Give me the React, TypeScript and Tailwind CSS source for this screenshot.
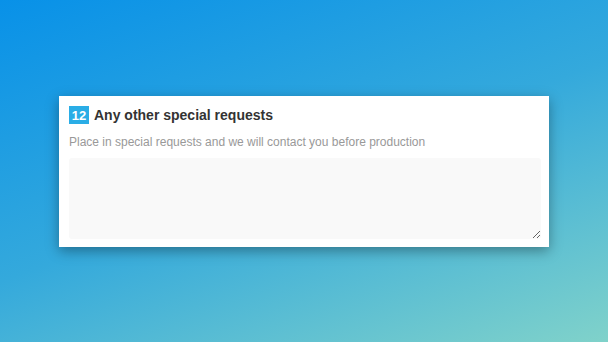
import React from "react";

export default function App() {
  return (
    <div
      className="w-[608px] h-[342px] flex items-start justify-center bg-[linear-gradient(160deg,#0891e8_0%,#34a9dc_50%,#80d2ca_100%)]"
      style={{ fontFamily: '"Liberation Sans", Arial, sans-serif' }}
    >
      <div className="mt-[96px] w-[490px] bg-white px-[10px] pt-[10px] pb-[8px] shadow-[0_4px_12px_rgba(0,0,0,0.35)]">
        <div className="flex items-center h-[18px]">
          <span className="w-[20px] h-[18px] bg-[#2aade6] text-white text-[13px] font-bold flex items-center justify-center leading-none">
            12
          </span>
          <span className="ml-[5px] text-[14px] font-bold text-[#333] leading-none">
            Any other special requests
          </span>
        </div>
        <div className="mt-[10px] text-[12px] text-[#999] leading-[16px]">
          Place in special requests and we will contact you before production
        </div>
        <textarea className="mt-[8px] block w-[472px] h-[81px] bg-[#f9f9f9] rounded-[3px] outline-none resize-y border-0" />
      </div>
    </div>
  );
}
